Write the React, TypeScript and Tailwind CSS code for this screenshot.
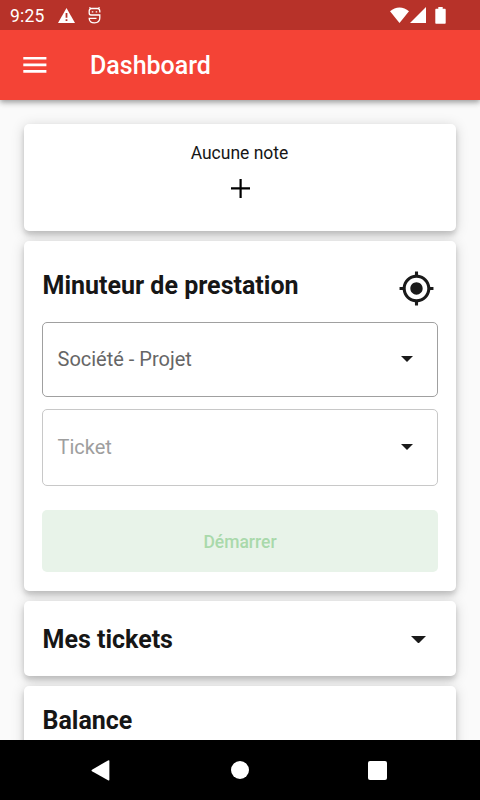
interface SelectFieldProps {
  label: string;
  disabled?: boolean;
}

function StatusBar() {
  return (
    <div className="relative z-20 flex h-[30px] shrink-0 items-center bg-[#b73229] text-white">
      <span className="ml-[10px] w-[48px] pt-px text-[17.5px] leading-[30px] tracking-[0.2px]">9:25</span>
      <svg width="17" height="15" viewBox="0 0 17 15" className="shrink-0">
        <path d="M8.5 0 17 15H0z" fill="#fff" />
        <path d="M7.600 5h1.800v4.800H7.600zM7.600 11.200h1.800v1.800H7.600z" fill="#b73229" />
      </svg>
      <svg width="13" height="17" viewBox="0 0 13 17" fill="none" stroke="#fff" strokeWidth="1.3" className="ml-[13px] shrink-0">
        <path d="M1.500 0.300 2.700 1.700M11.500 0.300 10.300 1.700" />
        <path d="M11.800 5.500V4Q11.800 1.500 9.500 1.500H3.500Q1.200 1.500 1.200 4V6Q1.200 8 3 8H11.800V11Q11.800 15.800 6.500 15.800Q1.200 15.800 1.200 11.300H8.500" />
        <path d="M3.800 4.800h1.500M7.700 4.800h1.500" strokeWidth="1.2" />
      </svg>
      <div className="flex-1" />
      <svg width="19" height="16" viewBox="0 0 19 16" fill="#fff" className="shrink-0">
        <path d="M9.5 16 0 4.2C5.500-.9 13.500-.9 19 4.200z" />
      </svg>
      <svg width="16" height="16" viewBox="0 0 16 16" fill="#fff" className="ml-[1px] shrink-0">
        <path d="M0 16 16 0V16z" />
      </svg>
      <svg width="11" height="17" viewBox="0 0 11 17" fill="#fff" className="ml-[9px] mr-[34px] shrink-0">
        <path d="M3.300 0h4.400v1.700H10q.7 0 .7 1V16q0 .7-.7.7H1q-.7 0-.7-.7V2.700q0-1 .7-1h2.300z" />
      </svg>
    </div>
  );
}

function AppBar() {
  return (
    <header className="relative z-10 flex h-[70px] shrink-0 items-center bg-[#f44336] text-white shadow-[0_2px_5px_rgba(0,0,0,0.3),0_4px_7px_rgba(0,0,0,0.1)]">
      <svg width="24" height="16" viewBox="0 0 24 16" fill="#fff" className="ml-[23px]">
        <path d="M0.300 0H23.400V2.600H0.300zM0.300 6.600H23.400V9.200H0.300zM0.300 13.100H23.400V15.700H0.300z" />
      </svg>
      <h1 className="ml-[43px] pt-[2px] text-[25px] font-medium leading-[30px]">Dashboard</h1>
    </header>
  );
}

function Caret({ className }: { className?: string }) {
  return (
    <svg viewBox="0 0 12 6" fill="#1a1a1a" preserveAspectRatio="none" className={className}>
      <path d="M0 0h12L6 6z" />
    </svg>
  );
}

function SelectField({ label, disabled }: SelectFieldProps) {
  return (
    <button
      className={`flex w-full items-center justify-between rounded-[5px] border pl-[14.5px] pr-[24px] text-[20px] ${
        disabled ? 'h-[77px] border-[#c8c8c8] pb-px text-[#9e9e9e]' : 'h-[75px] border-[#a0a0a0] pb-px text-[#666]'
      }`}
    >
      <span>{label}</span>
      <Caret className="h-[6px] w-[12px]" />
    </button>
  );
}

function Card({ className, children }: { className: string; children: React.ReactNode }) {
  return (
    <section className={`shrink-0 rounded-[5px] bg-white shadow-[0_4px_5px_rgba(0,0,0,0.15),0_2px_13px_rgba(0,0,0,0.17)] ${className}`}>
      {children}
    </section>
  );
}

function NavBar() {
  return (
    <nav className="relative z-10 flex h-[60px] shrink-0 items-center bg-black">
      <svg width="19" height="21" viewBox="0 0 19 21" fill="#fff" className="ml-[91px]">
        <path d="M17 .4Q18.400-.2 18.400 1V19.600Q18.400 20.900 17 20.200L1 11.300Q0 10.500 1 9.700z" />
      </svg>
      <div className="ml-[121px] h-[18px] w-[18px] rounded-full bg-white" />
      <div className="ml-[119px] h-[19px] w-[19px] rounded-[2px] bg-white" />
    </nav>
  );
}

export default function App() {
  return (
    <div className="flex h-[800px] w-[480px] flex-col overflow-hidden bg-[#fafafa] font-['Roboto',sans-serif] text-[#161616]">
      <StatusBar />
      <AppBar />

      <main className="flex min-h-0 flex-1 flex-col gap-[10px] overflow-hidden px-6 pt-6">
        <Card className="flex h-[107px] flex-col items-center">
          <p className="-ml-px mt-[18px] text-[17.5px] leading-[22px]">Aucune note</p>
          <svg width="19" height="19" viewBox="0 0 19 19" fill="#000" className="mt-[15px]">
            <path d="M8.500 0h2.200v8.300H19v2.200H10.700V19H8.500V10.500H0V8.300h8.500z" />
          </svg>
        </Card>

        <Card className="h-[350px] px-[18px]">
          <div className="flex h-[81px] items-center justify-between pt-[14px]">
            <h2 className="-mt-[5px] ml-[0.5px] text-[25px] font-bold leading-[30px]">Minuteur de prestation</h2>
            <svg width="37" height="37" viewBox="0 0 24 24" fill="#1a1a1a" className="mr-[3px]">
              <path d="M12 8c-2.210 0-4 1.790-4 4s1.790 4 4 4 4-1.790 4-4-1.790-4-4-4zm8.940 3c-.460-4.170-3.770-7.480-7.940-7.940V1h-2v2.060C6.830 3.520 3.520 6.830 3.060 11H1v2h2.060c.460 4.170 3.770 7.480 7.940 7.940V23h2v-2.060c4.170-.460 7.480-3.770 7.940-7.940H23v-2h-2.060zM12 19c-3.870 0-7-3.130-7-7s3.130-7 7-7 7 3.130 7 7-3.130 7-7 7z" />
            </svg>
          </div>
          <SelectField label="Société - Projet" />
          <div className="h-[12px]" />
          <SelectField label="Ticket" disabled />
          <button className="mt-[24px] h-[62px] w-full rounded-[5px] bg-[#e8f3e9] pt-[2px] text-[17.5px] font-medium text-[#a9d9ab]" disabled>
            Démarrer
          </button>
        </Card>

        <Card className="flex h-[75px] items-center justify-between pl-[18.5px] pr-[30px]">
          <h2 className="pt-[2px] text-[25px] font-bold leading-[30px]">Mes tickets</h2>
          <Caret className="mt-[2px] h-[7.500px] w-[15px]" />
        </Card>

        <Card className="h-[120px] pl-[18.5px] pt-[20px]">
          <h2 className="text-[25px] font-bold leading-[30px]">Balance</h2>
        </Card>
      </main>

      <NavBar />
    </div>
  );
}
